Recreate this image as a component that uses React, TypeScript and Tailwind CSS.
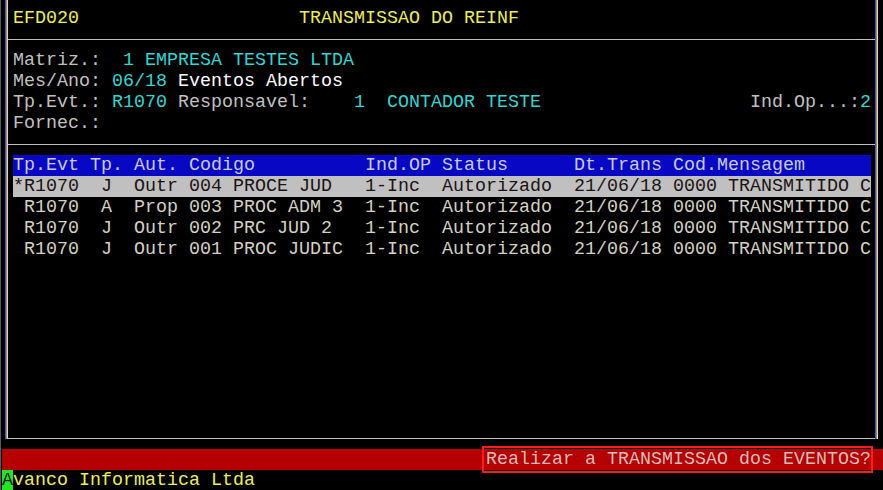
const gray = "text-[#c0c0c0]";
const cyan = "text-[#33d4d4]";
const yellow = "text-[#ecec5c]";

const linhas = [
  "*R1070  J  Outr 004 PROCE JUD   1-Inc  Autorizado  21/06/18 0000 TRANSMITIDO C",
  " R1070  A  Prop 003 PROC ADM 3  1-Inc  Autorizado  21/06/18 0000 TRANSMITIDO C",
  " R1070  J  Outr 002 PRC JUD 2   1-Inc  Autorizado  21/06/18 0000 TRANSMITIDO C",
  " R1070  J  Outr 001 PROC JUDIC  1-Inc  Autorizado  21/06/18 0000 TRANSMITIDO C",
];

function Borda() {
  return (
    <div className="flex w-[3px] shrink-0">
      <div className="w-px bg-[#3a5cb8]" />
      <div className="w-px bg-[#a8885a]" />
      <div className="w-px bg-[#d8d8d8]" />
    </div>
  );
}

function Linha({ children, className }: { children?: React.ReactNode; className?: string }) {
  return <div className={"h-[21px] whitespace-pre " + (className ?? "")}>{children}</div>;
}

function Separador() {
  return (
    <div className="h-[21px] flex items-center -ml-[5px] -mr-[1px]">
      <div className="h-px w-full bg-[#c0c0c0]" />
    </div>
  );
}

export default function App() {
  return (
    <div className="w-[883px] h-[490px] bg-black flex overflow-hidden font-[family-name:Liberation_Mono,Courier_New,monospace] text-[18.33px] leading-[21px]">
      <div className="w-[2px] shrink-0 border-l border-[#5a5a5a]" />
      <div className="w-[881px] flex flex-col">
        <div className="ml-[3px] w-[873px] flex">
          <Borda />
          <div className="flex-1 flex flex-col pl-[5px] pt-[8px] pb-[10px] border-b border-[#c0c0c0]">
            <Linha className={yellow}>{"EFD020                    TRANSMISSAO DO REINF"}</Linha>
            <Separador />
            <Linha>
              <span className={gray}>Matriz.:</span>
              <span className={cyan}>{"  1 EMPRESA TESTES LTDA"}</span>
            </Linha>
            <Linha>
              <span className={gray}>{"Mes/Ano: "}</span>
              <span className={cyan}>06/18</span>
              <span className="text-white">{" Eventos Abertos"}</span>
            </Linha>
            <Linha>
              <span className={gray}>{"Tp.Evt.: "}</span>
              <span className={cyan}>R1070</span>
              <span className={gray}>{" Responsavel:"}</span>
              <span className={cyan}>{"    1  CONTADOR TESTE                   "}</span>
              <span className={gray}>Ind.Op...:</span>
              <span className={cyan}>2</span>
            </Linha>
            <Linha className={gray}>Fornec.:</Linha>
            <Separador />
            <Linha className="w-[858px] bg-[#0808c4] text-[#c8c8d8]">
              {"Tp.Evt Tp. Aut. Codigo          Ind.OP Status      Dt.Trans Cod.Mensagem"}
            </Linha>
            {linhas.map((l, i) => (
              <Linha
                key={i}
                className={
                  "w-[858px] " + (i === 0 ? "bg-[#c0c0c0] text-[#1c1414]" : "text-[#d4d0c4]")
                }
              >
                {l}
              </Linha>
            ))}
            {Array.from({ length: 8 }).map((_, i) => (
              <Linha key={"v" + i} />
            ))}
          </div>
          <Borda />
        </div>
        <div className="h-[10px]" />
        <div className="h-[21px] bg-[#b60000] flex">
          <div className="w-[484px] shrink-0" />
          <span className="relative whitespace-pre text-[#d2bcbc]">
            Realizar a TRANSMISSAO dos EVENTOS?
            <span className="absolute -left-[4px] -right-[2px] -top-[3px] -bottom-[3px] border-2 border-[#ff1c1c]" />
          </span>
        </div>
        <div className="h-[20px] flex whitespace-pre">
          <span className="bg-[#22e622] text-[#202020]">A</span>
          <span className={yellow}>vanco Informatica Ltda</span>
        </div>
      </div>
    </div>
  );
}
